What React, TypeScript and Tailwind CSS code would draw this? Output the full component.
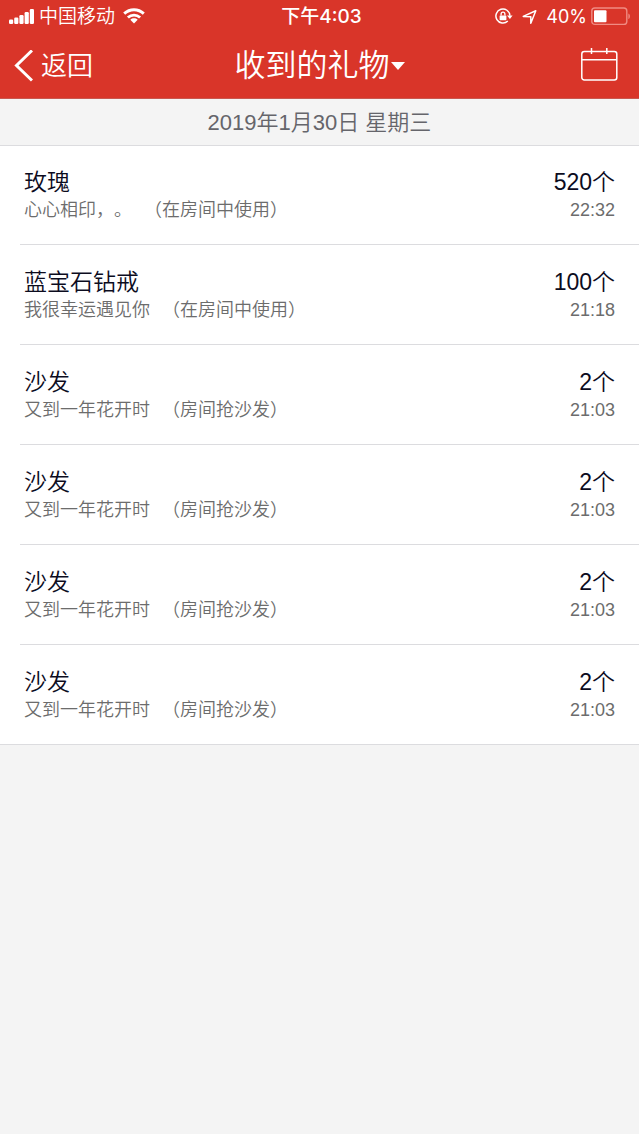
type Gift = {
  id: number;
  name: string;
  note: string;
  source: string;
  count: number;
  time: string;
};

const gifts: Gift[] = [
  { id: 1, name: "玫瑰", note: "心心相印，。", source: "在房间中使用", count: 520, time: "22:32" },
  { id: 2, name: "蓝宝石钻戒", note: "我很幸运遇见你", source: "在房间中使用", count: 100, time: "21:18" },
  { id: 3, name: "沙发", note: "又到一年花开时", source: "房间抢沙发", count: 2, time: "21:03" },
  { id: 4, name: "沙发", note: "又到一年花开时", source: "房间抢沙发", count: 2, time: "21:03" },
  { id: 5, name: "沙发", note: "又到一年花开时", source: "房间抢沙发", count: 2, time: "21:03" },
  { id: 6, name: "沙发", note: "又到一年花开时", source: "房间抢沙发", count: 2, time: "21:03" },
];

function SignalIcon() {
  return (
    <svg width="25" height="16" viewBox="0 0 25 16" fill="currentColor" aria-hidden="true">
      <rect x="0" y="10.5" width="4.2" height="4.5" rx="1.2" />
      <rect x="5.2" y="8.5" width="4.2" height="6.5" rx="1.2" />
      <rect x="10.4" y="6" width="4.2" height="9" rx="1.2" />
      <rect x="15.6" y="3" width="4.2" height="12" rx="1.2" />
      <rect x="20.8" y="0" width="4.2" height="15" rx="1.2" />
    </svg>
  );
}

function WifiIcon() {
  return (
    <svg className="overflow-visible" width="22" height="16" viewBox="0 0 22 16" fill="none" stroke="currentColor" strokeWidth="2.9" aria-hidden="true">
      <path d="M1.2 4.6C6.8 -.6 15.2 -.6 20.8 4.6" />
      <path d="M4.9 8.5c3.5-3.2 8.7-3.2 12.2 0" />
      <path d="M11 14.4 7.3 10.7c2.1-1.9 5.3-1.9 7.4 0Z" fill="currentColor" stroke="none" />
    </svg>
  );
}

function RotationLockIcon() {
  return (
    <svg className="overflow-visible" width="18" height="16" viewBox="0 0 18 16" fill="none" stroke="currentColor" strokeWidth="1.5" aria-hidden="true">
      <path d="M12.8 12A7 7 0 1 1 14.9 6.6" />
      <path d="M12 6.4h5.6L14.9 10Z" fill="currentColor" stroke="none" />
      <rect x="4.6" y="6.4" width="6.8" height="4.8" rx=".6" fill="currentColor" stroke="none" />
      <path d="M6.1 6.4V5a1.9 1.9 0 0 1 3.8 0v1.4" strokeWidth="1.3" />
    </svg>
  );
}

function LocationIcon() {
  return (
    <svg className="overflow-visible" width="15" height="15" viewBox="0 0 15 15" fill="none" stroke="currentColor" strokeWidth="1.5" strokeLinejoin="round" aria-hidden="true">
      <path d="M13.8 .8 8.8 13.2V6.8L1.2 6.4Z" />
    </svg>
  );
}

function BatteryIcon() {
  return (
    <svg className="overflow-visible" width="40" height="18" viewBox="0 0 40 18" fill="none" aria-hidden="true">
      <rect x=".8" y="0" width="35" height="16.4" rx="3" stroke="#f08b82" strokeWidth="1.4" />
      <rect x="3" y="2.2" width="12.5" height="12" rx="1" fill="#fff" />
      <path d="M37.4 5.4c2 .8 2 4.8 0 5.6Z" fill="#f08b82" />
    </svg>
  );
}

function StatusBar() {
  return (
    <div className="grid h-8 grid-cols-[1fr_auto_1fr] items-center pt-[2px]">
      <div className="flex items-center pl-[9px]">
        <SignalIcon />
        <span className="ml-[5px] mr-2 text-[19px] leading-6">中国移动</span>
        <WifiIcon />
      </div>
      <div className="pl-1 font-['Inter','Noto_Sans_CJK_SC',sans-serif] text-[19px] font-medium leading-6">
        下午4:03
      </div>
      <div className="flex items-center justify-end pr-2">
        <RotationLockIcon />
        <span className="mx-[9px]">
          <LocationIcon />
        </span>
        <span className="mr-1 font-['Inter',sans-serif] text-[18px] font-normal leading-6">40%</span>
        <BatteryIcon />
      </div>
    </div>
  );
}

function NavBar() {
  return (
    <div className="grid h-[66px] grid-cols-[1fr_auto_1fr] items-center pt-[2px]">
      <button type="button" className="flex items-center gap-2 justify-self-start pl-[14px] text-[26px] leading-8">
        <svg width="19" height="32" viewBox="0 0 19 32" fill="none" stroke="currentColor" strokeWidth="3" aria-hidden="true">
          <path d="M18 .5 2.5 15.5 18 30.5" />
        </svg>
        返回
      </button>
      <button type="button" className="flex items-center gap-px text-[31px] leading-10">
        收到的礼物
        <svg width="14" height="8" viewBox="0 0 14 8" fill="currentColor" aria-hidden="true">
          <path d="M0 0h14L7 8Z" />
        </svg>
      </button>
      <button type="button" aria-label="选择日期" className="justify-self-end pr-[21px]">
        <svg className="overflow-visible" width="38" height="34" viewBox="0 0 38 34" fill="none" stroke="currentColor" strokeWidth="1.5" aria-hidden="true">
          <rect x="1.8" y="2.5" width="35" height="28.5" rx="2.5" />
          <path d="M1.8 10.8h35M11.5 -1v6M26.8 -1v6" />
        </svg>
      </button>
    </div>
  );
}

function GiftRow({ gift }: { gift: Gift }) {
  return (
    <li className="group h-[100px] border-[#dcdcdf] bg-white pl-5 first:border-t last:border-b">
      <div className="flex h-full items-center justify-between border-b border-[#dcdcdf] pl-1 pr-6 pt-[2px] group-last:border-b-0">
        <div>
          <h2 className="text-[23px] leading-7 text-[#0c0c1e]">{gift.name}</h2>
          <p className="flex gap-3 text-[18px] leading-7 text-[#6c6c6c] [text-spacing-trim:space-all]">
            <span>{gift.note}</span>
            <span>（{gift.source}）</span>
          </p>
        </div>
        <div className="text-right">
          <p className="text-[23px] leading-7 text-[#0c0c1e]">{gift.count}个</p>
          <p className="text-[18px] leading-7 text-[#6c6c6c]">{gift.time}</p>
        </div>
      </div>
    </li>
  );
}

export default function App() {
  return (
    <div
      lang="zh-CN"
      className="min-h-screen bg-[#f4f4f4] font-['Liberation_Sans','Noto_Sans_CJK_SC',sans-serif] font-[350]"
    >
      <header className="border-b border-[#c9584f] bg-[#d93529] text-white">
        <StatusBar />
        <NavBar />
      </header>
      <main>
        <h1 className="pb-2 pt-[10px] text-center text-[22px] leading-7 text-[#65656b] [font-weight:inherit]">
          2019年1月30日 星期三
        </h1>
        <ul>
          {gifts.map((gift) => (
            <GiftRow key={gift.id} gift={gift} />
          ))}
        </ul>
      </main>
    </div>
  );
}
